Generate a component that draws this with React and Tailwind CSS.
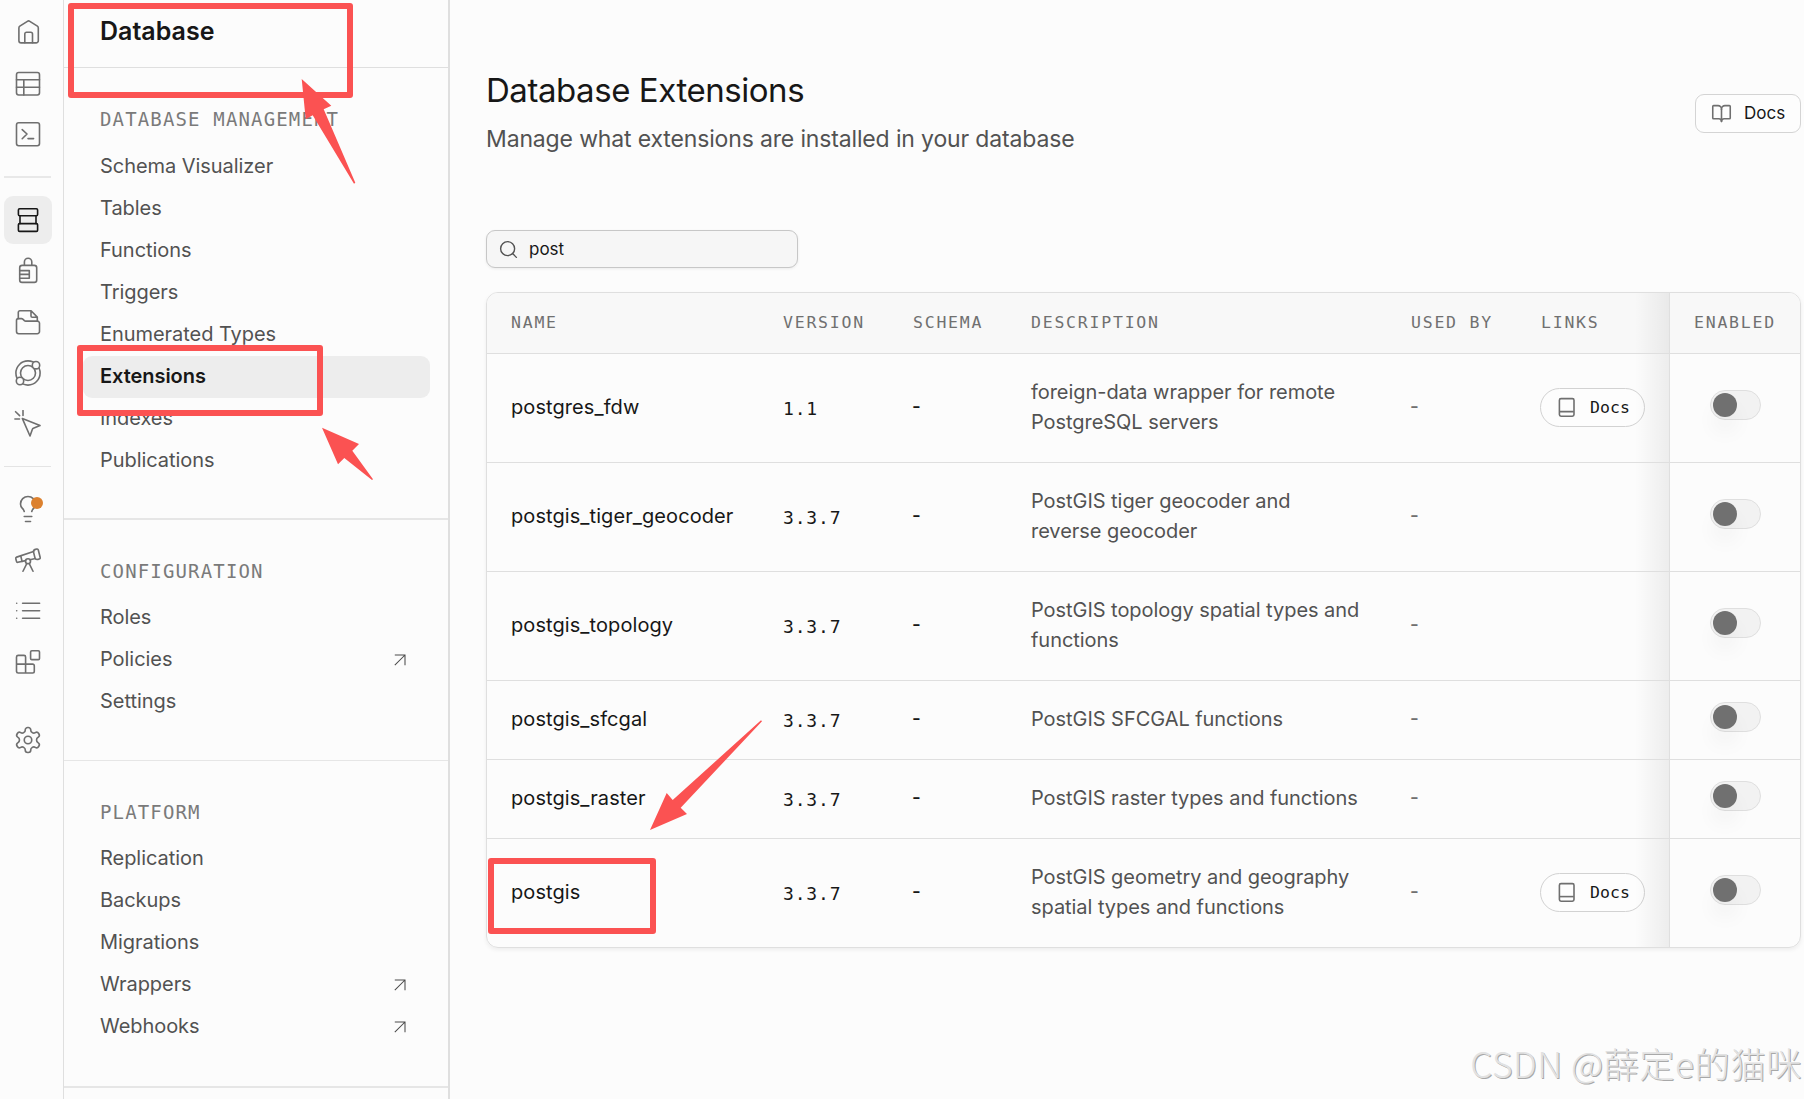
import React from 'react';
import { BookOpen, Lightbulb, Search, Telescope } from 'lucide-react';

const MONO = "font-['DejaVu_Sans_Mono','Liberation_Mono',monospace]";

function Glyph({ children, className = '' }) {
  return (
    <svg
      width="28"
      height="28"
      viewBox="0 0 28 28"
      fill="none"
      stroke="currentColor"
      strokeWidth="1.6"
      strokeLinecap="round"
      strokeLinejoin="round"
      className={className}
    >
      {children}
    </svg>
  );
}

const HomeIcon = () => (
  <Glyph>
    <path d="M4.9 9.9q0-1.1.9-1.7L13.4 3.3q1.2-.8 2.4 0L23.4 8.2q.9.6.9 1.7V22.7a2.2 2.2 0 0 1-2.2 2.2H7.1a2.2 2.2 0 0 1-2.2-2.2Z" />
    <path d="M10.8 24.8V16a1.7 1.7 0 0 1 1.7-1.7h4.3a1.7 1.7 0 0 1 1.7 1.7v8.8" />
  </Glyph>
);

const TableIcon = () => (
  <Glyph>
    <rect x="2.5" y="3.5" width="23" height="22.5" rx="2.2" />
    <path d="M2.5 10.8h23M2.5 18.2h23M9.8 10.8V26" />
  </Glyph>
);

const SqlIcon = () => (
  <Glyph>
    <rect x="2.5" y="2.8" width="23" height="23" rx="2.2" />
    <path d="m8.2 9.6 4.8 4.4-4.8 4.7M14 18.6h5.6" />
  </Glyph>
);

const DatabaseIcon = () => (
  <Glyph className="text-[#171717]">
    <rect x="4.4" y="2.8" width="19.2" height="7" rx="1.2" />
    <path d="M6 9.8v7.8M22 9.8v7.8" />
    <rect x="4.4" y="17.6" width="19.2" height="7.8" rx="1.2" />
  </Glyph>
);

const LockIcon = () => (
  <Glyph>
    <rect x="5.7" y="8.4" width="17" height="17" rx="2.4" />
    <path d="M10.4 8.2V5a3.7 3.7 0 0 1 7.4 0v3.2M5.7 13.6h9.6v7.6H5.7M5.7 17.4h9.6" />
  </Glyph>
);

const FolderIcon = () => (
  <Glyph>
    <path d="M2.5 12.4a1.8 1.8 0 0 1 1.8-1.8h3.2q.7 0 1.3.5l1.6 1.5q.5.5 1.3.5h11.6a2.2 2.2 0 0 1 2.2 2.2v8.2a2.2 2.2 0 0 1-2.2 2.2H4.7a2.2 2.2 0 0 1-2.2-2.2Z" />
    <path d="M4.3 10.6V4.4a1.6 1.6 0 0 1 1.6-1.6h11.2l6.2 6.3v4M17 3v4.9a1.3 1.3 0 0 0 1.3 1.3h4.7" />
  </Glyph>
);

const RealtimeIcon = () => (
  <Glyph>
    <circle cx="14" cy="14" r="12.1" />
    <circle cx="14" cy="14" r="7.5" />
    <circle cx="22" cy="6.2" r="3.7" fill="#fcfcfc" />
    <circle cx="6" cy="22" r="3.7" fill="#fcfcfc" />
  </Glyph>
);

const CursorIcon = () => (
  <Glyph>
    <path d="M8.4 8.6 26 15.6l-6.6 2.6q-.7.3-1 1L16 26ZM.9 9h4.6M1.6 1.7l4 3.9M9 .5v5" />
  </Glyph>
);

const ListIcon = () => (
  <Glyph>
    <path d="M8.6 6.2h17M8.6 13.7h17M8.6 21.2h17M2.7 6.2h.01M2.7 13.7h.01M2.7 21.2h.01" />
  </Glyph>
);

const BlocksIcon = () => (
  <Glyph>
    <path d="M11.6 25V9a1.6 1.6 0 0 0-1.6-1.6H4.2A1.7 1.7 0 0 0 2.5 9v14.4A1.7 1.7 0 0 0 4.2 25h14.4a1.7 1.7 0 0 0 1.7-1.7v-5.6a1.6 1.6 0 0 0-1.6-1.6H2.5" />
    <rect x="16.6" y="2.7" width="8.9" height="8.9" rx="1.2" />
  </Glyph>
);

const SettingsIcon = () => (
  <svg
    width="30"
    height="30"
    viewBox="0 0 24 24"
    fill="none"
    stroke="currentColor"
    strokeWidth="1.3"
    strokeLinecap="round"
    strokeLinejoin="round"
  >
    <path d="M12.22 2h-.44a2 2 0 0 0-2 2v.18a2 2 0 0 1-1 1.73l-.43.25a2 2 0 0 1-2 0l-.15-.08a2 2 0 0 0-2.73.73l-.22.38a2 2 0 0 0 .73 2.73l.15.1a2 2 0 0 1 1 1.72v.51a2 2 0 0 1-1 1.74l-.15.09a2 2 0 0 0-.73 2.73l.22.38a2 2 0 0 0 2.73.73l.15-.08a2 2 0 0 1 2 0l.43.25a2 2 0 0 1 1 1.73V20a2 2 0 0 0 2 2h.44a2 2 0 0 0 2-2v-.18a2 2 0 0 1 1-1.73l.43-.25a2 2 0 0 1 2 0l.15.08a2 2 0 0 0 2.73-.73l.22-.39a2 2 0 0 0-.73-2.73l-.15-.08a2 2 0 0 1-1-1.74v-.5a2 2 0 0 1 1-1.74l.15-.09a2 2 0 0 0 .73-2.73l-.22-.38a2 2 0 0 0-2.73-.73l-.15.08a2 2 0 0 1-2 0l-.43-.25a2 2 0 0 1-1-1.73V4a2 2 0 0 0-2-2z" />
    <circle cx="12" cy="12" r="3" />
  </svg>
);

const BookIcon = () => (
  <svg
    width="21"
    height="21"
    viewBox="0 0 21 21"
    fill="none"
    stroke="currentColor"
    strokeWidth="1.6"
    strokeLinejoin="round"
    className="text-[#6f6f6f]"
  >
    <rect x="3.4" y="1.6" width="14.6" height="17.6" rx="1.6" />
    <path d="M3.6 14.6h14.2" />
  </svg>
);

const ExternalArrow = () => (
  <svg width="12" height="12" viewBox="0 0 12 12" fill="none" stroke="#4a4a4a" strokeWidth="1.05">
    <path d="M.8 1H11v10.2M11 1 .8 11.2" />
  </svg>
);

function RailButton({ active, children }) {
  return (
    <div
      className={`relative flex size-12 items-center justify-center rounded-[9px] ${active ? 'bg-[#ededed]' : ''}`}
    >
      {children}
    </div>
  );
}

function Rail() {
  return (
    <nav className="flex w-16 shrink-0 flex-col border-r border-[#dfdfdf] pl-1 text-[#6f6f6f]">
      <div className="flex flex-col gap-[3px] pt-2">
        <RailButton><HomeIcon /></RailButton>
        <RailButton><TableIcon /></RailButton>
        <RailButton><SqlIcon /></RailButton>
      </div>
      <div className="mt-[18px] h-0.5 w-[47px] bg-[#e8e8e8]" />
      <div className="mt-[18px] flex flex-col gap-[3px]">
        <RailButton active><DatabaseIcon /></RailButton>
        <RailButton><LockIcon /></RailButton>
        <RailButton><FolderIcon /></RailButton>
        <RailButton><RealtimeIcon /></RailButton>
        <RailButton><CursorIcon /></RailButton>
      </div>
      <div className="mt-[18px] h-px w-[47px] bg-[#e4e4e4]" />
      <div className="mt-[18px] flex flex-col gap-[3px]">
        <RailButton>
          <Lightbulb size={30} strokeWidth={1.3} />
          <span className="absolute top-3 left-[27px] size-3 rounded-full bg-[#dc812f]" />
        </RailButton>
        <RailButton><Telescope size={30} strokeWidth={1.3} /></RailButton>
        <RailButton><ListIcon /></RailButton>
        <RailButton><BlocksIcon /></RailButton>
      </div>
      <div className="mt-[30px]">
        <RailButton><SettingsIcon /></RailButton>
      </div>
    </nav>
  );
}

const groups = [
  {
    title: 'DATABASE MANAGEMENT',
    items: [
      { label: 'Schema Visualizer' },
      { label: 'Tables' },
      { label: 'Functions' },
      { label: 'Triggers' },
      { label: 'Enumerated Types' },
      { label: 'Extensions', active: true },
      { label: 'Indexes' },
      { label: 'Publications' },
    ],
    box: 'h-[452px] border-b-2',
    list: 'mt-[13px]',
  },
  {
    title: 'CONFIGURATION',
    items: [{ label: 'Roles' }, { label: 'Policies', external: true }, { label: 'Settings' }],
    box: 'h-[241px] border-b',
    list: 'mt-3',
  },
  {
    title: 'PLATFORM',
    items: [
      { label: 'Replication' },
      { label: 'Backups' },
      { label: 'Migrations' },
      { label: 'Wrappers', external: true },
      { label: 'Webhooks', external: true },
    ],
    box: 'h-[327px] border-b-2',
    list: 'mt-3',
  },
];

function Sidebar() {
  return (
    <aside className="w-[386px] shrink-0 border-r-2 border-[#dfdfdf]">
      <div className="flex h-[68px] items-start border-b border-[#dfdfdf] pt-[13px] pl-9">
        <h2 className="text-[25px] leading-9 font-semibold text-[#171717]">Database</h2>
      </div>
      {groups.map((g) => (
        <section key={g.title} className={`border-[#e6e6e6] pt-[37px] ${g.box}`}>
          <h3 className={`pl-9 text-[19px] leading-7 tracking-[1.15px] whitespace-nowrap text-[#7a7a7a] ${MONO}`}>
            {g.title}
          </h3>
          <ul className={g.list}>
            {g.items.map((it) => (
              <li
                key={it.label}
                className={`mr-[18px] ml-[19px] flex h-[42px] items-center justify-between rounded-[9px] pr-6 pl-[17px] text-[20px] tracking-[-0.05px] ${
                  it.active ? 'bg-[#ededed] font-semibold text-[#171717]' : 'text-[#525252]'
                }`}
              >
                <span className="pb-0.5">{it.label}</span>
                {it.external && <ExternalArrow />}
              </li>
            ))}
          </ul>
        </section>
      ))}
    </aside>
  );
}

const COLS = 'grid grid-cols-[272px_130px_118px_380px_130px_152px_131px]';
const headers = ['NAME', 'VERSION', 'SCHEMA', 'DESCRIPTION', 'USED BY', 'LINKS', 'ENABLED'];

const rows = [
  { name: 'postgres_fdw', version: '1.1', text: ['foreign-data wrapper for remote', 'PostgreSQL servers'], docs: true },
  { name: 'postgis_tiger_geocoder', version: '3.3.7', text: ['PostGIS tiger geocoder and', 'reverse geocoder'] },
  { name: 'postgis_topology', version: '3.3.7', text: ['PostGIS topology spatial types and', 'functions'] },
  { name: 'postgis_sfcgal', version: '3.3.7', text: ['PostGIS SFCGAL functions'] },
  { name: 'postgis_raster', version: '3.3.7', text: ['PostGIS raster types and functions'] },
  { name: 'postgis', version: '3.3.7', text: ['PostGIS geometry and geography', 'spatial types and functions'], docs: true },
];

const Fade = () => (
  <span className="absolute inset-y-0 right-0 w-[34px] bg-linear-to-r from-black/0 to-black/6" />
);

function Toggle() {
  return (
    <span className="-mt-[6px] ml-[40px] flex h-[30px] w-[51px] items-center rounded-full border border-[#dfdfdf] bg-[#f2f2f2] pl-[1.5px]">
      <span className="size-[24.5px] rounded-full bg-[#707070] shadow-[0_15px_22px_-4px_rgba(0,0,0,0.1)]" />
    </span>
  );
}

function Row({ row, last }) {
  return (
    <div
      className={`${COLS} ${row.text.length > 1 ? (last ? 'h-[108px]' : 'h-[109px]') : 'h-[79px]'} ${
        last ? '' : 'border-b border-[#dfdfdf]'
      }`}
    >
      <div className="flex items-center pb-0.5 pl-6 text-[20px] tracking-[0.08px] text-[#171717]">{row.name}</div>
      <div className={`flex items-center pl-6 text-[18px] tracking-[0.85px] text-[#171717] ${MONO}`}>{row.version}</div>
      <div className="flex items-center pb-0.5 pl-[23px] text-[19px] font-medium text-[#171717]">-</div>
      <div className="flex flex-col justify-center pb-0.5 pl-6 text-[20px] leading-[30px] tracking-[-0.05px] text-[#525252]">
        {row.text.map((line) => (
          <span key={line} className="whitespace-nowrap">{line}</span>
        ))}
      </div>
      <div className="flex items-center pb-0.5 pl-[23px] text-[19px] font-medium text-[#707070]">-</div>
      <div className="relative flex items-center pl-[23px]">
        {row.docs && (
          <span className="-mt-px flex h-[39px] w-[105px] items-center rounded-full border border-[#d2d2d2] bg-[#fdfdfd] pl-[15px]">
            <BookIcon />
            <span className={`ml-[13px] text-[16.5px] leading-7 tracking-[0.1px] text-[#171717] ${MONO}`}>Docs</span>
          </span>
        )}
        <Fade />
      </div>
      <div className="flex items-center border-l border-[#dfdfdf]">
        <Toggle />
      </div>
    </div>
  );
}

function Annotations() {
  return (
    <>
      <div className="absolute top-[3px] left-[68px] h-[95px] w-[285px] rounded-[3px] border-[6px] border-[#fb5252]" />
      <div className="absolute top-[345px] left-[77px] h-[71px] w-[246px] rounded-[3px] border-[6px] border-[#fb5252]" />
      <div className="absolute top-[858px] left-[488px] h-[76px] w-[168px] rounded-[3px] border-[6px] border-[#fb5252]" />
      <svg className="absolute inset-0" width="1804" height="1099" viewBox="0 0 1804 1099" fill="#fb5252">
        <path d="m301.7 79 29.6 26.7-7.6 3.6 31.6 73.4-1.3 1-41.3-68.4-7 4Z" />
        <path d="m322 427.7 37 16.3-6.7 6.7 20.7 28.6-1 .7-27.7-22-6.3 6.3Z" />
        <path d="m650 830 16.7-37 6 7 88.3-79.7 1 1-81.3 86.4 6.3 6.3Z" />
      </svg>
      <div className="absolute right-[2px] bottom-[12px] text-[35.3px] leading-[48px] font-light tracking-[0.5px] whitespace-nowrap text-[#e2e2e2] [font-family:'Noto_Sans_CJK_SC',sans-serif] [text-shadow:1px_1px_0_#a8a8a8]">
        CSDN @薛定e的猫咪
      </div>
    </>
  );
}

export default function App() {
  return (
    <div className="relative flex h-[1099px] w-[1804px] overflow-hidden bg-[#fcfcfc] font-['Inter',sans-serif]">
      <Rail />
      <Sidebar />
      <main className="flex-1 pr-[3px] pl-9">
        <header className="flex h-[166px] items-start justify-between">
          <div className="pt-[68px]">
            <h1 className="text-[33px] leading-[44px] tracking-[-0.45px] whitespace-nowrap text-[#171717]">
              Database Extensions
            </h1>
            <p className="mt-[11px] text-[23px] leading-8 tracking-[-0.15px] whitespace-nowrap text-[#525252]">
              Manage what extensions are installed in your database
            </p>
          </div>
          <button className="mt-[94px] flex h-[39px] w-[106px] items-center rounded-[9px] border border-[#d4d4d4] bg-[#fdfdfd] pl-[15px]">
            <BookOpen size={21} strokeWidth={1.8} className="text-[#6f6f6f]" />
            <span className="ml-[12px] text-[17px] text-[#171717]">Docs</span>
          </button>
        </header>
        <div className="mt-16 flex h-[38px] w-[312px] items-center rounded-[9px] border border-[#c7c7c7] bg-[#f6f6f6] pl-[11px] shadow-[0_1px_3px_rgba(0,0,0,0.07)]">
          <Search size={21} strokeWidth={1.6} className="text-[#525252]" />
          <span className="ml-[10px] pt-px text-[17px] text-[#171717]">post</span>
        </div>
        <div className="mt-6 overflow-hidden rounded-xl border border-[#dfdfdf] shadow-[0_2px_4px_rgba(0,0,0,0.06)]">
          <div className={`${COLS} h-[61px] border-b border-[#dfdfdf] bg-[#f8f8f8] text-[16.5px] tracking-[1.77px] text-[#707070] ${MONO}`}>
            {headers.map((h, i) => (
              <div
                key={h}
                className={`relative flex items-center pl-6 whitespace-nowrap ${i === 6 ? 'border-l border-[#dfdfdf]' : ''}`}
              >
                {h}
                {i === 5 && <Fade />}
              </div>
            ))}
          </div>
          {rows.map((r, i) => (
            <Row key={r.name} row={r} last={i === rows.length - 1} />
          ))}
        </div>
      </main>
      <Annotations />
    </div>
  );
}
